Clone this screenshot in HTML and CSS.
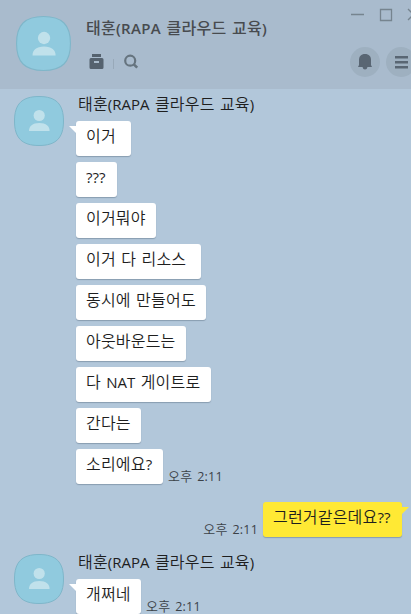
FILE: index.html
```
<!DOCTYPE html>
<html lang="ko">
<head>
    <meta charset="UTF-8">
    <meta name="viewport" content="width=device-width, initial-scale=1.0">
    <title>태훈(RAPA 클라우드 교육)</title>
    <link rel="stylesheet" href="styles.css">
</head>
<body>
    <header>
        <svg class="avatar avatar-big" viewBox="0 0 50 50">
            <path class="face" d="M25 .5C42 .5 49.500 8 49.500 25S42 49.500 25 49.500 .5 42 .5 25 8 .5 25 .5Z"/>
            <circle class="person" cx="25.500" cy="20" r="5.600"/>
            <path class="person" d="M15 36c0-5 3.500-8.200 10.500-8.200S36 31 36 36Z"/>
        </svg>
        <div class="room">
            <h1>태훈<span class="latin">(RAPA</span> 클라우드 교육<span class="latin">)</span></h1>
            <div class="tools">
                <svg width="16" height="16" viewBox="0 0 16 16">
                    <path fill="#55626f" d="M3 0h9v3H3ZM2 4h11q1.500 0 1.500 1.500v8q0 1.500-1.500 1.500H2Q.5 15 .5 13.500v-8Q.5 4 2 4Z"/>
                    <path fill="#a9bbcc" d="M5 7h5v2H5Z"/>
                </svg>
                <span class="divider"></span>
                <svg width="16" height="16" viewBox="0 0 16 16" fill="none" stroke="#66747f">
                    <circle cx="6.200" cy="6.700" r="5" stroke-width="2.200"/>
                    <path d="M9.800 10.300l3.400 3.400" stroke-width="2.600"/>
                </svg>
            </div>
        </div>
        <svg class="window-buttons" width="60" height="22" viewBox="0 0 60 22" fill="none" stroke="#76848f">
            <path d="M0 14.500h13M29.500 9.500h11v11h-11ZM57 9l11 11M68 9L57 20" stroke-width="1.300"/>
        </svg>
        <div class="round-buttons">
            <span class="round">
                <svg width="14" height="16" viewBox="0 0 14 16" fill="#596673">
                    <path d="M7 0c4 0 6 2.500 6 6v5l1 2H9.500Q9 15.500 7 15.500T4.500 13H0l1-2V6c0-3.500 2-6 6-6Z"/>
                </svg>
            </span>
            <span class="round">
                <svg width="13" height="13" viewBox="0 0 13 13" fill="#596673">
                    <path d="M0 0h13v2.500H0ZM0 5h13v2.500H0ZM0 10h13v2.500H0Z"/>
                </svg>
            </span>
        </div>
    </header>

    <main>
        <section class="group">
            <svg class="avatar" viewBox="0 0 50 50">
                <path class="face" d="M25 .5C42 .5 49.500 8 49.500 25S42 49.500 25 49.500 .5 42 .5 25 8 .5 25 .5Z"/>
                <circle class="person" cx="25.200" cy="19.500" r="5.600"/>
                <path class="person" d="M15 35c0-5 3.500-8 10.300-8s10.300 3 10.300 8Z"/>
            </svg>
            <div class="messages">
                <h2>태훈<span class="latin">(RAPA</span> 클라우드 교육<span class="latin">)</span></h2>
                <p class="bubble tail w55">이거</p>
                <p class="bubble w41"><span class="latin">???</span></p>
                <p class="bubble w80">이거뭐야</p>
                <p class="bubble w125">이거 다 리소스</p>
                <p class="bubble w130">동시에 만들어도</p>
                <p class="bubble w110">아웃바운드는</p>
                <p class="bubble w135">다 <span class="latin">NAT</span> 게이트로</p>
                <p class="bubble w65">간다는</p>
                <div class="line">
                    <p class="bubble w87">소리에요<span class="latin">?</span></p>
                    <time>오후 <span class="latin">2:11</span></time>
                </div>
            </div>
        </section>

        <section class="mine">
            <time>오후 <span class="latin">2:11</span></time>
            <p class="bubble yellow w139">그런거같은데요<span class="latin">??</span></p>
        </section>

        <section class="group">
            <svg class="avatar" viewBox="0 0 50 50">
                <path class="face" d="M25 .5C42 .5 49.500 8 49.500 25S42 49.500 25 49.500 .5 42 .5 25 8 .5 25 .5Z"/>
                <circle class="person" cx="25.200" cy="19.500" r="5.600"/>
                <path class="person" d="M15 35c0-5 3.500-8 10.300-8s10.300 3 10.300 8Z"/>
            </svg>
            <div class="messages">
                <h2>태훈<span class="latin">(RAPA</span> 클라우드 교육<span class="latin">)</span></h2>
                <div class="line">
                    <p class="bubble tail w65">개쩌네</p>
                    <time>오후 <span class="latin">2:11</span></time>
                </div>
            </div>
        </section>
    </main>
</body>
</html>
```
FILE: styles.css
```
* {
    box-sizing: border-box;
}
body {
    margin: 0;
    height: 614px;
    overflow: hidden;
    background-color: #b2c7da;
    color: #1e1e1e;
    font-family: "Open Sans", "Noto Sans CJK KR", sans-serif;
    font-size: 16px;
    font-weight: 350;
    letter-spacing: 0.2px;
    word-spacing: 1px;
}
h1, h2, p {
    margin: 0;
    font-size: 16px;
    white-space: nowrap;
}
svg {
    display: block;
    flex: none;
}
.latin {
    font-size: 15px;
    font-weight: 400;
    letter-spacing: 0;
}
header {
    position: relative;
    display: flex;
    height: 89px;
    padding: 16px 0 0 16px;
    background-color: #a9bbcd;
}
.avatar {
    width: 50px;
    height: 50px;
}
.avatar-big {
    width: 55px;
    height: 55px;
}
.face {
    fill: #90cade;
    stroke: #7fb6c9;
    stroke-width: 1;
}
.person {
    fill: #c0e1eb;
}
.room {
    margin-left: 15px;
}
h1 {
    height: 24px;
    line-height: 24px;
    color: #484b4f;
    font-weight: 500;
    letter-spacing: 0.3px;
}
h1 .latin {
    font-weight: 600;
    letter-spacing: 0.3px;
}
.tools {
    display: flex;
    align-items: flex-start;
    margin: 14px 0 0 3px;
}
.divider {
    width: 1px;
    height: 10px;
    margin: 5px 10px 0 8px;
    background-color: #98a9b9;
}
.window-buttons {
    position: absolute;
    top: 0;
    right: 0;
}
.round-buttons {
    position: absolute;
    top: 47px;
    left: 350px;
    display: flex;
    gap: 6px;
}
.round {
    display: flex;
    flex: none;
    align-items: center;
    justify-content: center;
    width: 30px;
    height: 30px;
    border-radius: 50%;
    background-color: #9eb0c0;
}
.group {
    display: flex;
    padding: 7px 0 0 14px;
}
.messages {
    margin-left: 12px;
}
h2 {
    height: 25px;
    padding-left: 2px;
    line-height: 16px;
    font-weight: 350;
}
.bubble {
    position: relative;
    height: 35px;
    margin-bottom: 6px;
    padding-left: 10px;
    border-radius: 3px;
    background-color: #fff;
    box-shadow: 0 1px 1px rgba(60, 80, 100, 0.35);
    line-height: 30px;
}
.tail::before {
    content: "";
    position: absolute;
    top: 5px;
    left: -7px;
    border-top: 8px solid #fff;
    border-left: 8px solid transparent;
}
.yellow {
    background-color: #ffe934;
}
.yellow::after {
    content: "";
    position: absolute;
    top: 5px;
    right: -7px;
    border-top: 8px solid #ffe934;
    border-right: 8px solid transparent;
}
.line, .mine {
    display: flex;
    align-items: flex-start;
}
.mine {
    justify-content: flex-end;
    margin: 12px 0 4px;
    padding-right: 9px;
}
time {
    margin: 18px 5px 0;
    color: #3b4147;
    font-size: 13px;
    line-height: 18px;
    letter-spacing: 0.3px;
}
time .latin {
    font-size: 12.5px;
    letter-spacing: 0.2px;
}
.w41 { width: 41px; }
.w55 { width: 55px; }
.w65 { width: 65px; }
.w80 { width: 80px; }
.w87 { width: 87px; }
.w110 { width: 110px; }
.w125 { width: 125px; }
.w130 { width: 130px; }
.w135 { width: 135px; }
.w139 { width: 139px; }
```
